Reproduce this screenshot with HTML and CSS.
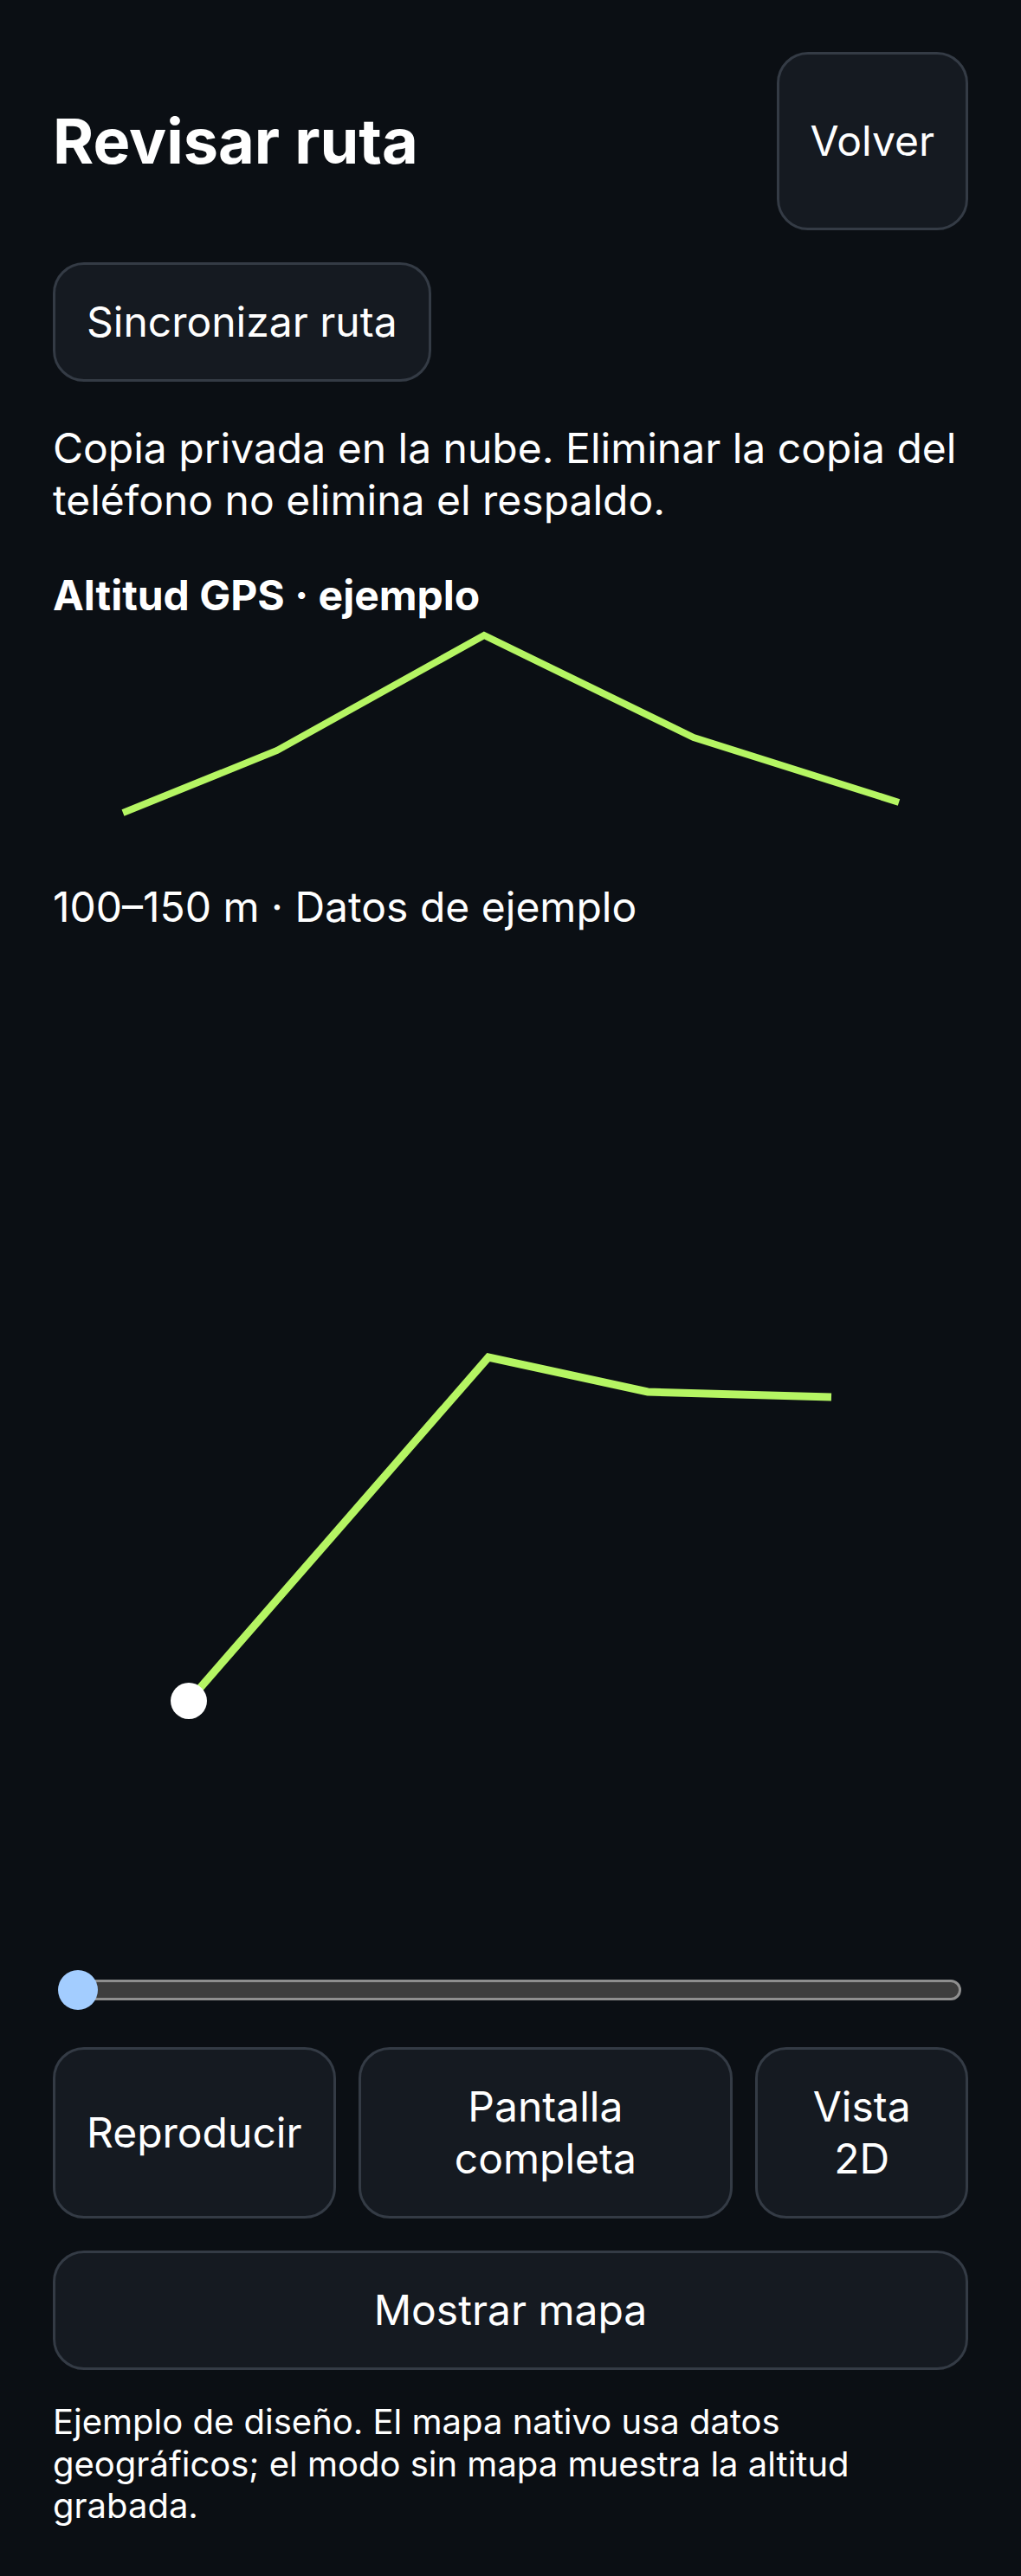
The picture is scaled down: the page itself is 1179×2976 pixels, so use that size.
FILE: index.html
```html
<!DOCTYPE html>
<html lang="es">
  <head>
    <meta charset="UTF-8" />
    <meta name="viewport" content="width=device-width, initial-scale=1.0" />
    <title>Revisar ruta</title>
    <link rel="stylesheet" href="styles.css">
  </head>
  <body>
    <div id="screen">
      <div class="header">
        <h1 class="title">Revisar ruta</h1>
        <button class="btn back">Volver</button>
      </div>

      <button class="btn sync">Sincronizar ruta</button>

      <p class="note">Copia privada en la nube. Eliminar la copia del teléfono no elimina el respaldo.</p>

      <h2 class="chartTitle">Altitud GPS · ejemplo</h2>
      <svg class="profile" viewBox="0 0 1057 300">
        <polyline points="81,221 259,149 498,16 740,134 977,209" />
      </svg>
      <p class="range">100–150 m · Datos de ejemplo</p>

      <!-- vista sin mapa: trazado grabado -->
      <svg class="track" viewBox="0 0 1057 1170">
        <polyline points="157,887 503,490 687,530 899,536" />
        <circle cx="157" cy="887" r="21" />
      </svg>

      <div class="slider">
        <div class="rail"></div>
        <div class="knob"></div>
      </div>

      <div class="actions">
        <button class="btn">Reproducir</button>
        <button class="btn">Pantalla completa</button>
        <button class="btn">Vista 2D</button>
      </div>

      <button class="btn map">Mostrar mapa</button>

      <p class="foot">Ejemplo de diseño. El mapa nativo usa datos geográficos; el modo sin mapa muestra la altitud grabada.</p>
    </div>
  </body>
</html>
```

FILE: styles.css
```css
* {
  margin: 0;
  padding: 0;
  box-sizing: border-box;
}
body {
  background: #0b0f14;
  color: #fff;
  font-family: Inter, "Noto Sans", sans-serif;
}
#screen {
  display: flex;
  flex-direction: column;
  padding: 60px 61px 0;
}
#screen .header {
  display: flex;
  justify-content: space-between;
  align-items: center;
}
#screen .title {
  font-size: 72px;
  font-weight: 700;
  line-height: 90px;
}
#screen .btn {
  background: #151a21;
  border: 3px solid #343b45;
  border-radius: 36px;
  padding: 36px;
  color: #fff;
  font-family: inherit;
  font-size: 48px;
  line-height: 60px;
  text-align: center;
  outline: none;
}
#screen .back {
  height: 206px;
}
#screen .sync {
  align-self: flex-start;
  margin-top: 37px;
}
#screen .note {
  margin-top: 47px;
  font-size: 48px;
  line-height: 60px;
}
#screen .chartTitle {
  margin-top: 50px;
  font-size: 48px;
  font-weight: 700;
  line-height: 60px;
}
#screen svg {
  display: block;
  width: 1057px;
}
#screen svg polyline {
  fill: none;
  stroke: #b5f563;
}
#screen .profile {
  height: 300px;
}
#screen .profile polyline {
  stroke-width: 8;
}
#screen .range {
  font-size: 48px;
  line-height: 60px;
}
#screen .track {
  height: 1170px;
}
#screen .track polyline {
  stroke-width: 9;
}
#screen .track circle {
  fill: #fff;
}
#screen .slider {
  position: relative;
  height: 46px;
  margin-top: 28px;
}
#screen .slider .rail {
  margin: 11px 8px 0 7px;
  height: 24px;
  background: #3d3d3d;
  border: 3px solid #8e8e8e;
  border-radius: 12px;
}
#screen .slider .knob {
  position: absolute;
  left: 6px;
  top: 0;
  width: 46px;
  height: 46px;
  border-radius: 50%;
  background: #a3cdff;
}
#screen .actions {
  display: flex;
  gap: 26px;
  margin-top: 43px;
}
#screen .actions .btn {
  flex: 0 1 auto;
}
#screen .map {
  margin-top: 37px;
}
#screen .foot {
  margin-top: 36px;
  font-size: 40px;
  line-height: 48.5px;
}
```
